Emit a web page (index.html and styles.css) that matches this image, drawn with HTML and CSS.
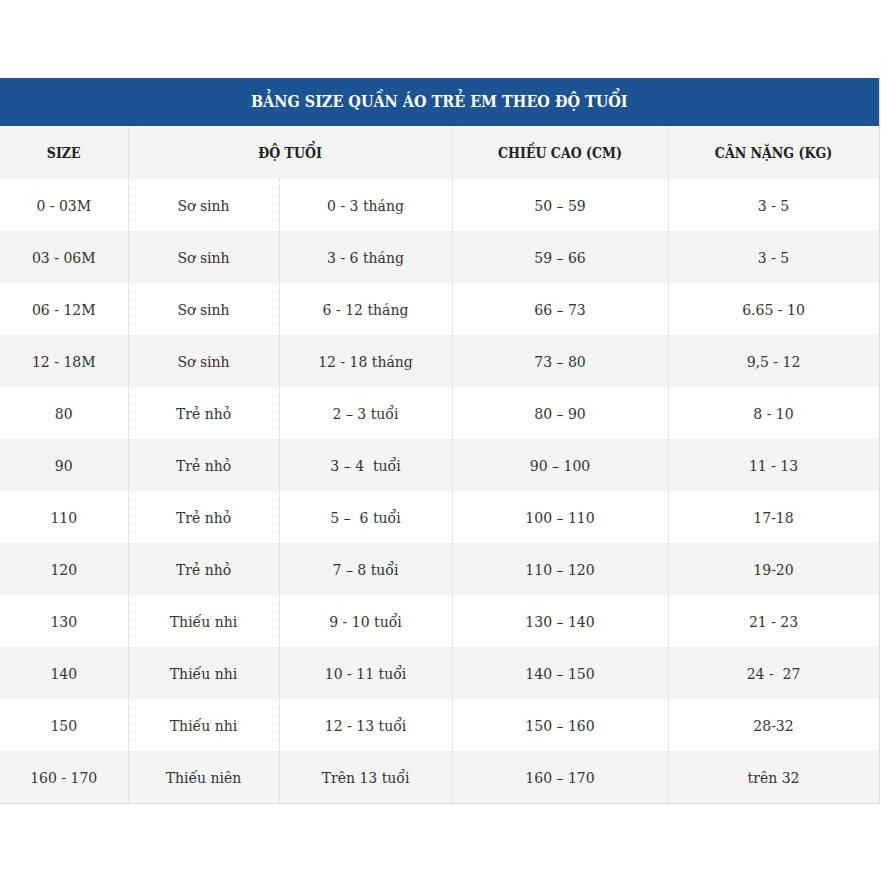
FILE: index.html
```html
<!DOCTYPE html>
<html lang="vi">
<head>
<meta charset="utf-8">
<title>Bảng size quần áo trẻ em</title>
<link rel="stylesheet" href="styles.css">
</head>
<body>
<table class="size-table">
  <colgroup>
    <col class="c1"><col class="c2"><col class="c3"><col class="c4"><col class="c5">
  </colgroup>
  <thead>
    <tr class="title-row"><th colspan="5">BẢNG SIZE QUẦN ÁO TRẺ EM THEO ĐỘ TUỔI</th></tr>
    <tr class="head-row"><th>SIZE</th><th colspan="2">ĐỘ TUỔI</th><th>CHIỀU CAO (CM)</th><th>CÂN NẶNG (KG)</th></tr>
  </thead>
  <tbody>
    <tr><td>0 - 03M</td><td>Sơ sinh</td><td>0 - 3 tháng</td><td>50 – 59</td><td>3 - 5</td></tr>
    <tr><td>03 - 06M</td><td>Sơ sinh</td><td>3 - 6 tháng</td><td>59 – 66</td><td>3 - 5</td></tr>
    <tr><td>06 - 12M</td><td>Sơ sinh</td><td>6 - 12 tháng</td><td>66 – 73</td><td>6.65 - 10</td></tr>
    <tr><td>12 - 18M</td><td>Sơ sinh</td><td>12 - 18 tháng</td><td>73 – 80</td><td>9,5 - 12</td></tr>
    <tr><td>80</td><td>Trẻ nhỏ</td><td>2 – 3 tuổi</td><td>80 – 90</td><td>8 - 10</td></tr>
    <tr><td>90</td><td>Trẻ nhỏ</td><td>3 – 4&nbsp; tuổi</td><td>90 – 100</td><td>11 - 13</td></tr>
    <tr><td>110</td><td>Trẻ nhỏ</td><td>5 –&nbsp; 6 tuổi</td><td>100 – 110</td><td>17-18</td></tr>
    <tr><td>120</td><td>Trẻ nhỏ</td><td>7 – 8 tuổi</td><td>110 – 120</td><td>19-20</td></tr>
    <tr><td>130</td><td>Thiếu nhi</td><td>9 - 10 tuổi</td><td>130 – 140</td><td>21 - 23</td></tr>
    <tr><td>140</td><td>Thiếu nhi</td><td>10 - 11 tuổi</td><td>140 – 150</td><td>24 -&nbsp; 27</td></tr>
    <tr><td>150</td><td>Thiếu nhi</td><td>12 - 13 tuổi</td><td>150 – 160</td><td>28-32</td></tr>
    <tr><td>160 - 170</td><td>Thiếu niên</td><td>Trên 13 tuổi</td><td>160 – 170</td><td>trên 32</td></tr>
  </tbody>
</table>
</body>
</html>
```
FILE: styles.css
```css
html, body {
  margin: 0;
  padding: 0;
  background: #fff;
}
body {
  padding-top: 78px;
  font-family: "DejaVu Serif", "Liberation Serif", serif;
  color: #333;
}
.size-table {
  width: 879px;
  border-collapse: collapse;
  table-layout: fixed;
  border-bottom: 1px solid #ddd;
  border-right: 1px solid #ddd;
}
.c1 { width: 128px; }
.c2 { width: 151px; }
.c3 { width: 173px; }
.c4 { width: 216px; }
.c5 { width: 211px; }
.title-row th {
  background: #1b5393;
  color: #fff;
  height: 46px;
  padding: 0 0 2px;
  font-family: "DejaVu Serif Condensed", "DejaVu Serif", serif;
  font-stretch: condensed;
  font-size: 16px;
  font-weight: bold;
  text-align: center;
  border: 0;
}
.head-row th {
  background: #f4f4f4;
  height: 53px;
  padding: 0;
  font-family: "DejaVu Serif Condensed", "DejaVu Serif", serif;
  font-stretch: condensed;
  font-size: 14px;
  font-weight: bold;
  color: #222;
  text-align: center;
}
td {
  height: 51px;
  padding: 1px 0 0;
  font-size: 14px;
  text-align: center;
}
.head-row th + th, td + td {
  border-left: 1px dotted #d4d4d4;
}
tbody tr:nth-child(even) td { background: #f4f4f4; }
```
